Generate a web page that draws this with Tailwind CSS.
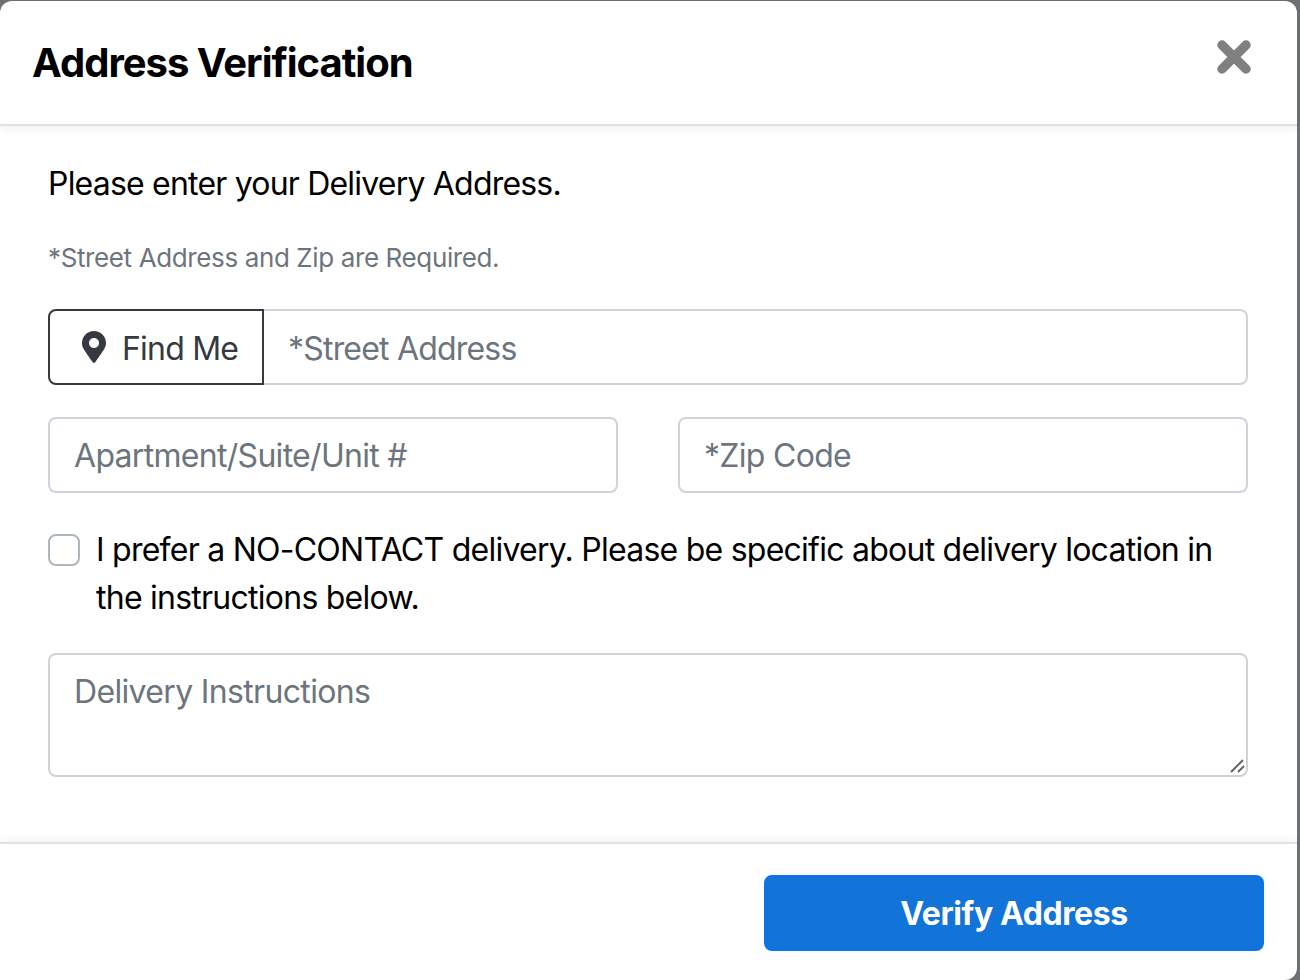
<!DOCTYPE html>
<html lang="en">
<head>
  <meta charset="UTF-8">
  <meta name="viewport" content="width=device-width, initial-scale=1.0">
  <script src="https://cdn.jsdelivr.net/npm/@tailwindcss/browser@4"></script>
  <title>Address Verification</title>
</head>
<body class="h-screen overflow-hidden bg-[#6f7072] font-['Inter',sans-serif] text-[32px] tracking-[-0.8px] text-black">
  <div class="mt-px flex h-[979px] w-[1297px] flex-col rounded-t-[12px] rounded-br-[12px] bg-white">
    <!-- header -->
    <div class="relative z-10 flex h-[125px] shrink-0 items-start justify-between border-b-2 border-[#dee2e6] pr-[46px] pl-[32px] shadow-[0_4px_8px_rgba(0,0,0,0.05)]">
      <h2 class="pt-[36px] text-[40px] leading-[52px] font-bold tracking-[-1px]">Address Verification</h2>
      <button class="mt-[39px]" aria-label="Close">
        <svg width="34" height="34" viewBox="0 0 34 34" fill="none" stroke="#808080" stroke-width="9.5" stroke-linecap="round" class="block"><path d="M5 5 29 29M29 5 5 29"/></svg>
      </button>
    </div>

    <!-- body -->
    <div class="flex h-[716px] shrink-0 flex-col pr-[49px] pl-[48px] pt-[34px]">
      <p class="leading-[48px]">Please enter your Delivery Address.</p>
      <p class="mt-[32px] text-[26px] leading-[36px] tracking-[-0.38px] text-[#6c757d]">*Street Address and Zip are Required.</p>

      <div class="mt-[33px] flex h-[76px]">
        <button class="flex w-[216px] shrink-0 items-center gap-[16px] rounded-l-[8px] border-2 border-[#343a40] pl-[32px] tracking-[-0.8px] text-[#343a40]">
          <svg width="24" height="32" viewBox="0 0 384 512" fill="#343a40" class="shrink-0"><path d="M172.268 501.67C26.97 291.031 0 262.429 0 192 0 85.961 85.961 0 192 0s192 85.961 192 192c0 70.429-26.97 99.031-172.268 309.67-9.535 13.774-29.93 13.773-39.464 0zM192 272c44.183 0 80-35.817 80-80s-35.817-80-80-80-80 35.817-80 80 35.817 80 80 80z"/></svg>
          <span class="pt-[3px]">Find Me</span>
        </button>
        <input type="text" placeholder="*Street Address" class="min-w-0 flex-1 rounded-r-[8px] border-2 border-l-0 border-[#ced4da] pt-[3px] pl-[24px] tracking-[-0.8px] placeholder:text-[#6c757d]">
      </div>

      <div class="mt-[32px] grid grid-cols-2 gap-[60px]">
        <input type="text" placeholder="Apartment/Suite/Unit #" class="h-[76px] min-w-0 rounded-[8px] border-2 border-[#ced4da] px-[24px] tracking-[-0.7px] placeholder:text-[#6c757d]">
        <input type="text" placeholder="*Zip Code" class="h-[76px] min-w-0 rounded-[8px] border-2 border-[#ced4da] px-[24px] tracking-[-0.7px] placeholder:text-[#6c757d]">
      </div>

      <label class="mt-[33px] flex items-start">
        <span class="mt-[8px] h-[32px] w-[32px] shrink-0 rounded-[8px] border-2 border-[#adb5bd] bg-white"></span>
        <span class="ml-[16px] leading-[48px] tracking-[-0.75px]">I prefer a NO-CONTACT delivery. Please be specific about delivery location in the instructions below.</span>
      </label>

      <div class="relative mt-[31px] h-[124px]">
        <textarea placeholder="Delivery Instructions" class="block h-full w-full resize-none rounded-[8px] border-2 border-[#ced4da] px-[24px] pt-[13px] leading-[48px] tracking-[-0.66px] placeholder:text-[#6c757d]"></textarea>
        <svg width="16" height="16" viewBox="0 0 16 16" stroke="#666" stroke-width="2" class="absolute right-[2px] bottom-[3px]"><path d="M1 14 13 2M8 14 14 8"/></svg>
      </div>
    </div>

    <!-- footer -->
    <div class="flex flex-1 items-start justify-end border-t-2 border-[#dee2e6] pt-[31px] pr-[33px] shadow-[0_-4px_8px_rgba(0,0,0,0.04)]">
      <button class="h-[76px] w-[500px] rounded-[8px] border-2 border-[#0a74ee] bg-[#1273d9] pt-[2px] font-bold tracking-[-0.4px] text-white">Verify Address</button>
    </div>
  </div>
</body>
</html>
